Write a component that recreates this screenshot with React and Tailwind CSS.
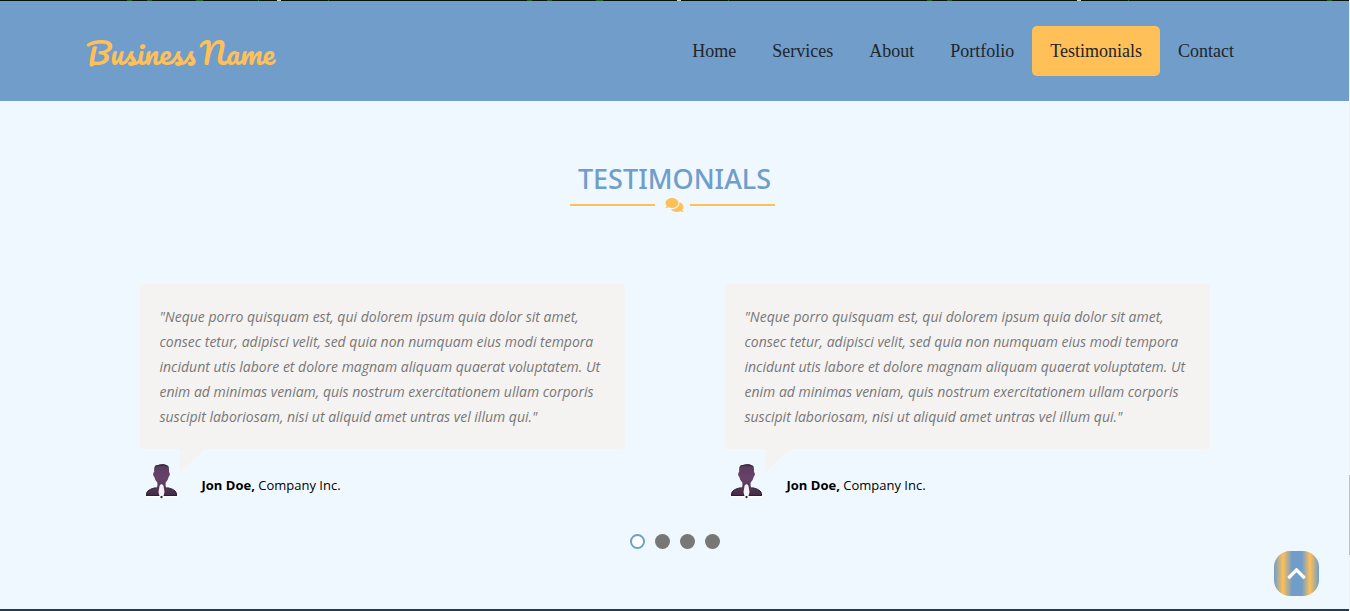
import { FaChevronUp, FaComments } from "react-icons/fa";

const links = ["Home", "Services", "About", "Portfolio", "Testimonials", "Contact"];
const quote =
  '"Neque porro quisquam est, qui dolorem ipsum quia dolor sit amet, consec tetur, adipisci velit, sed quia non numquam eius modi tempora incidunt utis labore et dolore magnam aliquam quaerat voluptatem. Ut enim ad minimas veniam, quis nostrum exercitationem ullam corporis suscipit laboriosam, nisi ut aliquid amet untras vel illum qui."';

function HeroEdge() {
  return (
    <svg className="block h-px w-full bg-[#06130a]" aria-hidden="true">
      <g fill="#1c5a24">
        <rect x="127" width="5" height="1" />
        <rect x="147" width="5" height="1" />
        <rect x="196" width="7" height="1" />
        <rect x="258" width="1" height="1" />
        <rect x="328" width="1" height="1" />
        <rect x="527" width="5" height="1" />
        <rect x="547" width="5" height="1" />
        <rect x="596" width="7" height="1" />
        <rect x="728" width="1" height="1" />
        <rect x="927" width="5" height="1" />
        <rect x="947" width="5" height="1" />
        <rect x="1128" width="1" height="1" />
        <rect x="1327" width="5" height="1" />
      </g>
      <g fill="#c8d3bd">
        <rect x="277" width="4" height="1" />
        <rect x="677" width="4" height="1" />
        <rect x="1077" width="4" height="1" />
      </g>
    </svg>
  );
}

function Avatar({ id }) {
  return (
    <svg viewBox="0 0 31 35" className="h-[35px] w-[31px] shrink-0" aria-hidden="true">
      <defs>
        <linearGradient id={id} x1="0" y1="0" x2="0" y2="1">
          <stop offset="0" stopColor="#5a3c5c" />
          <stop offset="0.45" stopColor="#66436a" />
          <stop offset="1" stopColor="#432c46" />
        </linearGradient>
      </defs>
      <path d="M0 31v2.500h31V31z" fill="#fff" />
      <path
        d="M8.200 8C7.800 3 8.800 1 12 1 15 0 18.500.2 20.500 1.200c2.300.4 2.800 2.800 2.500 6.800 1.300.8 1.100 4-.3 4.800-.5 2.400-1.500 4.200-3.100 5.600v3.300c0 1 .7 1.700 1.800 2 5.400 1.400 9.600 2.400 9.600 7.800H0c0-5.400 4.200-6.400 9.600-7.800 1.100-.3 1.800-1 1.800-2v-3.300c-1.600-1.400-2.600-3.200-3.100-5.600C6.900 12 6.800 8.600 8.200 8z"
        fill={`url(#${id})`}
      />
      <path d="M8.500 3.500C8.900 1.800 10 1 12 1 15 0 18.500.2 20.500 1.200c1.400.3 2 1.100 2.300 2.300-1.600-1.300-3.600-1.500-7-1.500-3.300 0-5.800.2-7.300 1.500z" fill="#3e2a40" />
      <path d="M.5 31.500c0-5.500 4.200-6.500 9.100-7.800M30.500 31.500c0-5.500-4.200-6.500-9.100-7.800M0 31.500h31" fill="none" stroke="#2d1e30" strokeWidth="1" />
      <path d="M13.500 22c.8-2.300 3.200-2.300 4 0l1 6-1.200 5h-3.600l-1.200-5z" fill="#f5f2f6" />
      <path d="M14.500 32h2v1.500l-1 1-1-1z" fill="#3e2a40" />
    </svg>
  );
}

function Testimonial({ id }) {
  return (
    <figure className="min-w-0">
      <blockquote className="relative rounded-[3px] bg-[#f5f3f2] p-5 text-sm leading-[25px] text-[#777] italic">
        {quote}
        <svg viewBox="0 0 25 24" className="absolute top-full left-10 h-6 w-[25px]" aria-hidden="true">
          <path d="M0 0h25L0 24z" fill="#f5f3f2" />
        </svg>
      </blockquote>
      <figcaption className="flex items-center gap-[25px] pt-[15px] pl-[6px] text-[13px] leading-5 text-black">
        <Avatar id={id} />
        <span className="pt-[6px]">
          <b className="font-bold">Jon Doe,</b> Company Inc.
        </span>
      </figcaption>
    </figure>
  );
}

export default function App() {
  return (
    <div className="flex min-h-screen bg-[#f0f8ff] font-['Open_Sans','Noto_Sans',sans-serif]">
      <div className="flex min-w-0 flex-1 flex-col">
        <HeroEdge />
        <header className="flex h-[100px] items-center justify-between bg-[#709dca] pr-[97px] pl-[86px]">
          <a href="#home" className="flex gap-1 pt-1 font-[Pacifico,cursive] text-[30px] leading-10 text-[#ffc057]">
            <span>Business</span> <span>Name</span>
          </a>
          <nav className="flex font-['Liberation_Serif',serif] text-lg text-[#212529]">
            {links.map((label) => (
              <a
                key={label}
                href={`#${label.toLowerCase()}`}
                className={`flex h-[50px] items-center rounded-[5px] px-[18px] ${label === "Testimonials" ? "bg-[#ffc057]" : ""}`}
              >
                {label}
              </a>
            ))}
          </nav>
        </header>

        <main className="flex-1 px-6 pt-[60px]">
          <h2 className="text-center font-['Noto_Sans',sans-serif] text-[27px] leading-9 font-medium text-[#709dca]">TESTIMONIALS</h2>
          <div className="flex items-center justify-center pr-1 text-[#ffc057]">
            <span className="h-[2px] w-[85px] bg-[#ffc057]" />
            <FaComments className="mr-[6px] ml-[10px] h-4 w-[19px]" />
            <span className="h-[2px] w-[85px] bg-[#ffc057]" />
          </div>

          <div className="mx-auto mt-[71px] grid max-w-[1070px] grid-cols-2 gap-[100px]">
            <Testimonial id="avatar-a" />
            <Testimonial id="avatar-b" />
          </div>

          <div className="mt-[35px] flex justify-center gap-[10px]">
            {[1, 2, 3, 4].map((n) => (
              <button
                key={n}
                type="button"
                aria-label={`Slide ${n}`}
                className={`size-[15px] rounded-full ${n === 1 ? "border-2 border-[#709dca] bg-white" : "bg-[#777]"}`}
              />
            ))}
          </div>
        </main>
        <footer className="h-[2px] bg-[#263c4a]" />
      </div>

      <div className="flex w-px flex-col bg-[#f1f1f1]" aria-hidden="true">
        <span className="mt-[475px] h-20 bg-[#c1c1c1]" />
      </div>

      <button
        type="button"
        aria-label="Back to top"
        className="fixed right-[31px] bottom-[15px] flex size-[45px] items-center justify-center rounded-[16px] bg-[linear-gradient(90deg,#709dca_0%,#ffc057_20%,#709dca_40%,#709dca_62%,#ffc057_80%,#709dca_100%)] text-white"
      >
        <FaChevronUp className="size-[21px]" />
      </button>
    </div>
  );
}
